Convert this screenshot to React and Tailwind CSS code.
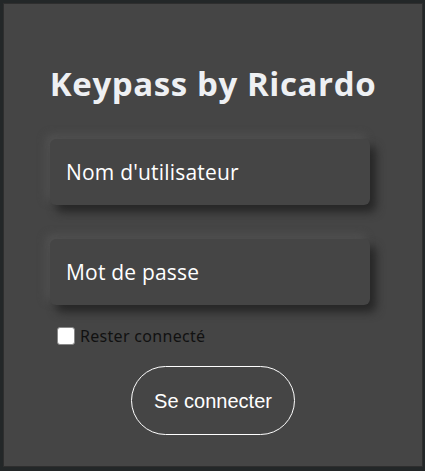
export default function App() {
  return (
    <div className="w-[425px] h-[471px] bg-[#232728] pt-[3px] pl-[3px]">
      <div className="w-[420px] h-[464px] bg-[#454545] border border-[#2e2e2e] flex flex-col items-center font-['Open_Sans',sans-serif]">
        <h1 className="mt-[59px] text-[33px] leading-[42px] font-bold text-[#eef0f3] tracking-[0.6px]">Keypass by Ricardo</h1>
        <form className="mt-[34px] self-start ml-[46px] flex flex-col w-[320px]">
          <input
            type="text"
            placeholder="Nom d'utilisateur"
            className="h-[66px] rounded-[6px] bg-[#454545] px-4 text-[21px] tracking-[0.2px] text-white placeholder-white outline-none shadow-[6px_7px_10px_#262626,-4px_-4px_8px_#525252]"
          />
          <input
            type="password"
            placeholder="Mot de passe"
            className="mt-[34px] h-[66px] rounded-[6px] bg-[#454545] px-4 text-[21px] tracking-[0.2px] text-white placeholder-white outline-none shadow-[6px_7px_10px_#262626,-4px_-4px_8px_#525252]"
          />
          <label className="mt-[19px] ml-[7px] flex items-center gap-[5px] text-[16px] tracking-[0.3px] text-[#111] font-['Noto_Sans',sans-serif]">
            <span className="w-[18px] h-[18px] rounded-[3px] bg-white border border-[#888]" />
            Rester connecté
          </label>
          <button
            type="button"
            className="mt-[18px] self-center ml-[6px] w-[164px] h-[69px] rounded-full border border-white text-white text-[20px] font-['Liberation_Sans',sans-serif]"
          >
            Se connecter
          </button>
        </form>
      </div>
    </div>
  );
}
